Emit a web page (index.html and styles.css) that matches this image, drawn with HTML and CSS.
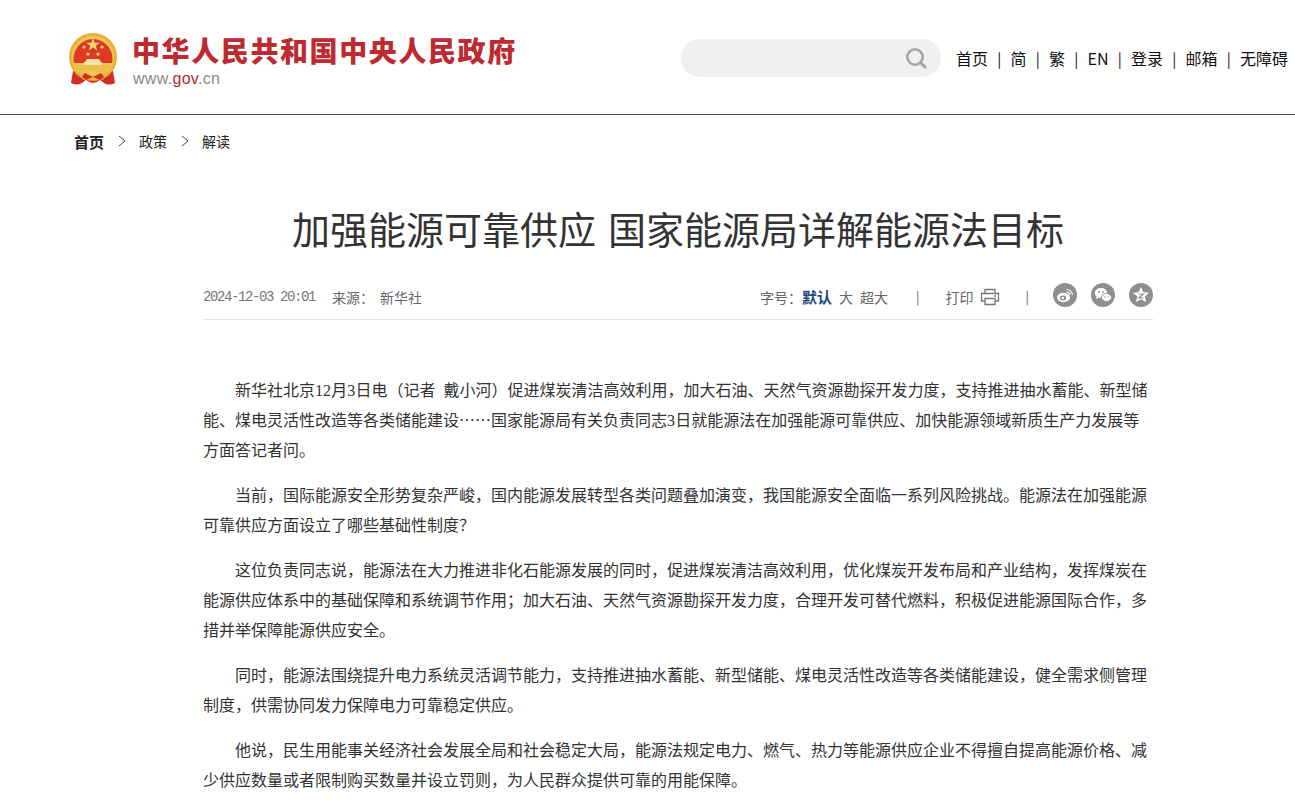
FILE: index.html
```html
<!DOCTYPE html>
<html lang="zh-CN">
<head>
<meta charset="utf-8">
<title>加强能源可靠供应 国家能源局详解能源法目标</title>
<link rel="stylesheet" href="styles.css">
</head>
<body>
<header class="site-header">
  <a class="brand" href="#">
    <svg class="emblem" viewBox="0 0 50 54" width="50" height="54">
      <path d="M5 38 L3 50 Q9 53 14 50 L18 47 Q25 53 32 47 L36 50 Q41 53 47 50 L45 38 Z" fill="#d22f22"/>
      <circle cx="25" cy="24" r="24" fill="#e8b036"/>
      <circle cx="25" cy="24" r="21" fill="#f0c85a"/>
      <path d="M6 30 A19.500 19.500 0 1 1 44 30 Z" fill="#dd3a26"/>
      <path d="M25 5 l1.700 4.700 5 0 -4 3 1.500 4.800 -4.200 -2.900 -4.200 2.900 1.500 -4.800 -4 -3 5 0z" fill="#f6d469"/>
      <circle cx="16" cy="14" r="1.600" fill="#f6d469"/>
      <circle cx="34" cy="14" r="1.600" fill="#f6d469"/>
      <circle cx="20" cy="21" r="1.600" fill="#f6d469"/>
      <circle cx="30" cy="21" r="1.600" fill="#f6d469"/>
      <path d="M19 26 h12 l2 3 h-16z M16 29 h18 v3 h-18z" fill="#f8e3a4"/>
      <path d="M5 32 h40 l-3 7 h-34z" fill="#edbf4c"/>
      <path d="M13 39 q12 8 24 0 l-2 8 q-10 -5 -20 0z" fill="#e8b036"/>
      <path d="M14 44 l3 -4 l8 4 l8 -4 l3 4 l-4 3 l-7 -3 l-7 3z" fill="#d22f22"/>
    </svg>
    <span class="brand-text">
      <span class="brand-name">中华人民共和国中央人民政府</span>
      <span class="brand-url">www.<b>gov</b>.cn</span>
    </span>
  </a>
  <div class="header-right">
    <div class="search">
      <svg viewBox="0 0 22 22" width="22" height="22" class="search-icon">
        <circle cx="10" cy="10" r="7.700" fill="none" stroke="#a5a5a5" stroke-width="2.600"/>
        <path d="M15.500 15.500 L20 20" stroke="#a5a5a5" stroke-width="3" stroke-linecap="round"/>
      </svg>
    </div>
    <nav class="top-nav">
      <a href="#">首页</a><i>|</i><a href="#">简</a><i>|</i><a href="#">繁</a><i>|</i><a href="#">EN</a><i>|</i><a href="#">登录</a><i>|</i><a href="#">邮箱</a><i>|</i><a href="#">无障碍</a>
    </nav>
  </div>
</header>

<nav class="crumbs">
  <a class="crumb-home" href="#">首页</a>
  <svg class="chev" viewBox="0 0 8 12" width="8" height="12"><path d="M1 1 L7 6 L1 11" fill="none" stroke="#444" stroke-width="1"/></svg>
  <a href="#">政策</a>
  <svg class="chev" viewBox="0 0 8 12" width="8" height="12"><path d="M1 1 L7 6 L1 11" fill="none" stroke="#444" stroke-width="1"/></svg>
  <a href="#">解读</a>
</nav>

<main class="article">
  <h1>加强能源可靠供应 国家能源局详解能源法目标</h1>
  <div class="meta">
    <div class="meta-left">
      <span class="date">2024-12-03 20:01</span>
      <span>来源：</span>
      <span>新华社</span>
    </div>
    <div class="meta-right">
      <span class="size-label">字号：<b>默认</b><span class="size-opt">大</span><span class="size-opt">超大</span></span>
      <span class="rule rule-a">|</span>
      <span class="print">打印
        <svg viewBox="0 0 20 18" width="20" height="18">
          <path d="M5 5 V1.500 H15 V5 M5 13 H1.500 V5.500 H18.500 V13 H15 M5 10.500 H15 V16.500 H5 Z M14 8 H16" fill="none" stroke="#777" stroke-width="1.300"/>
        </svg>
      </span>
      <span class="rule rule-b">|</span>
      <span class="shares">
        <svg class="share" viewBox="0 0 24 24" width="24" height="24">
          <circle cx="12" cy="12" r="12" fill="#8f8f8f"/>
          <ellipse cx="10.500" cy="14.500" rx="6.500" ry="4.700" fill="#fff"/>
          <ellipse cx="10" cy="15" rx="3.200" ry="2.500" fill="#8f8f8f"/>
          <circle cx="9.800" cy="15" r="1.200" fill="#fff"/>
          <path d="M13.500 6.500 A6 6 0 0 1 19.500 12 M13.500 9 A3 3 0 0 1 16.800 12" fill="none" stroke="#fff" stroke-width="1.200"/>
        </svg>
        <svg class="share" viewBox="0 0 24 24" width="24" height="24">
          <circle cx="12" cy="12" r="12" fill="#8f8f8f"/>
          <ellipse cx="10" cy="10" rx="6.300" ry="5" fill="#fff"/>
          <path d="M6 13 L5 16 L9 14z" fill="#fff"/>
          <ellipse cx="15.500" cy="14.500" rx="5" ry="4" fill="#fff" stroke="#8f8f8f"/>
          <circle cx="8" cy="9" r=".9" fill="#8f8f8f"/>
          <circle cx="12" cy="9" r=".9" fill="#8f8f8f"/>
          <circle cx="14" cy="14" r=".7" fill="#8f8f8f"/>
          <circle cx="17" cy="14" r=".7" fill="#8f8f8f"/>
        </svg>
        <svg class="share" viewBox="0 0 24 24" width="24" height="24">
          <circle cx="12" cy="12" r="12" fill="#8f8f8f"/>
          <path d="M12 4 L14.400 9.200 L20 9.800 L15.800 13.500 L17 19 L12 16.200 L7 19 L8.200 13.500 L4 9.800 L9.600 9.200 Z" fill="#fff"/>
          <path d="M9.500 11 H14.500 L9.500 15 H14.500" fill="none" stroke="#8f8f8f" stroke-width="1.200"/>
        </svg>
      </span>
    </div>
  </div>
  <div class="body-text">
    <p>新华社北京<span class="num">12</span>月<span class="num">3</span>日电（记者 戴小河）促进煤炭清洁高效利用，加大石油、天然气资源勘探开发力度，支持推进抽水蓄能、新型储能、煤电灵活性改造等各类储能建设……国家能源局有关负责同志<span class="num">3</span>日就能源法在加强能源可靠供应、加快能源领域新质生产力发展等方面答记者问。</p>
    <p>当前，国际能源安全形势复杂严峻，国内能源发展转型各类问题叠加演变，我国能源安全面临一系列风险挑战。能源法在加强能源可靠供应方面设立了哪些基础性制度？</p>
    <p>这位负责同志说，能源法在大力推进非化石能源发展的同时，促进煤炭清洁高效利用，优化煤炭开发布局和产业结构，发挥煤炭在能源供应体系中的基础保障和系统调节作用；加大石油、天然气资源勘探开发力度，合理开发可替代燃料，积极促进能源国际合作，多措并举保障能源供应安全。</p>
    <p>同时，能源法围绕提升电力系统灵活调节能力，支持推进抽水蓄能、新型储能、煤电灵活性改造等各类储能建设，健全需求侧管理制度，供需协同发力保障电力可靠稳定供应。</p>
    <p>他说，民生用能事关经济社会发展全局和社会稳定大局，能源法规定电力、燃气、热力等能源供应企业不得擅自提高能源价格、减少供应数量或者限制购买数量并设立罚则，为人民群众提供可靠的用能保障。</p>
  </div>
</main>
</body>
</html>
```

FILE: styles.css
```css
* { box-sizing: border-box; }
html, body { margin: 0; padding: 0; }
body {
  font-family: "Noto Sans CJK SC", "Liberation Sans", sans-serif;
  color: #333;
  background: #fff;
  height: 808px;
  overflow: hidden;
}
a { color: inherit; text-decoration: none; }

.site-header {
  height: 115px;
  border-bottom: 1px solid #3b4f66;
  display: flex;
  justify-content: space-between;
  padding: 33px 7px 0 68px;
}
.brand { display: flex; gap: 15px; align-items: flex-start; }
.emblem { display: block; flex: none; filter: blur(.35px); }
.brand-text { display: flex; flex-direction: column; }
.brand-name {
  font-size: 28px;
  font-weight: 900;
  letter-spacing: 1.6px;
  line-height: 36px;
  margin-top: -1px;
  margin-left: -1px;
  color: #bd2a2f;
}
.brand-url {
  font-family: "Liberation Sans", sans-serif;
  font-size: 16px;
  line-height: 21px;
  color: #8a8a8a;
  letter-spacing: .3px;
}
.brand-url b { font-weight: 400; color: #b1282e; }

.header-right { display: flex; align-items: flex-start; margin-top: 6px; }
.search {
  width: 260px;
  height: 38px;
  border-radius: 19px;
  background: #f0f0f0;
  display: flex;
  justify-content: flex-end;
  align-items: center;
  padding-right: 14px;
  margin-right: 15px;
}
.top-nav {
  display: flex;
  align-items: center;
  height: 38px;
  font-size: 16px;
  color: #111;
}
.top-nav i { font-style: normal; width: 22.5px; text-align: center; font-size: 15px; }

.crumbs {
  display: flex;
  align-items: center;
  padding-left: 74px;
  height: 52px;
  font-size: 14px;
  color: #222;
}
.crumb-home { font-weight: 700; font-size: 15px; }
.chev { margin: 0 13px 0 14px; }

.article { width: 950px; margin: 0 0 0 203px; }
h1 {
  margin: 34px 0 0;
  font-size: 38px;
  font-weight: 400;
  line-height: 54px;
  word-spacing: 3.5px;
  text-align: center;
  color: #333;
}
.meta {
  margin-top: 22px;
  height: 43px;
  padding-bottom: 2px;
  border-bottom: 1px solid #e2e2e2;
  display: flex;
  justify-content: space-between;
  align-items: center;
  font-size: 14px;
  color: #666;
}
.meta-left { display: flex; gap: 17px; margin-top: -1px; }
.meta-left span:last-child { margin-left: -11px; }
.date { font-family: "Liberation Mono", monospace; font-size: 14px; letter-spacing: -1.4px; line-height: 20px; color: #777; }
.meta-right { display: flex; align-items: center; margin-top: -1px; }
.size-label b { color: #1f4a7d; font-weight: 700; font-size: 15px; line-height: 0; }
.size-opt { margin-left: 7px; }
.rule { font-size: 13px; color: #666; }
.rule-a { margin: 0 26px 0 28px; }
.rule-b { margin: 0 27px 0 25px; }
.print { display: flex; align-items: center; gap: 7px; }
.shares { display: flex; gap: 14px; margin-left: -3px; margin-top: -4px; }
.share { display: block; }

.body-text { margin-top: 54px; }
.body-text p {
  margin: 0 0 15px;
  font-size: 16px;
  line-height: 30px;
  text-indent: 32px;
  word-spacing: 4.4px;
  color: #333;
}
.num { font-family: "Liberation Serif", serif; line-height: 0; margin: 0 .1px; }
```
